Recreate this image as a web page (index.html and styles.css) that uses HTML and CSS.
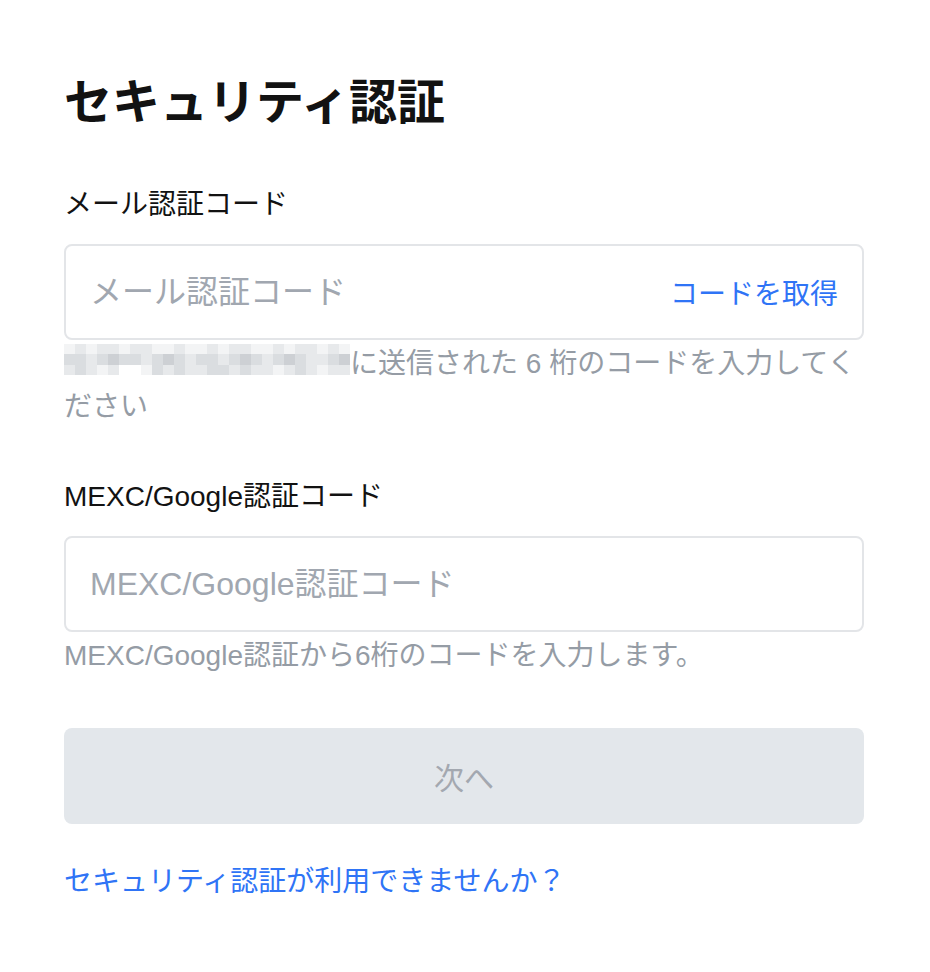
FILE: index.html
```html
<!DOCTYPE html>
<html lang="ja">
<head>
<meta charset="utf-8">
<title>セキュリティ認証</title>
<link rel="stylesheet" href="styles.css">
</head>
<body>
<main class="page">
  <h1 class="title">セキュリティ認証</h1>

  <section class="field">
    <label class="label" for="mail">メール認証コード</label>
    <div class="box">
      <input class="input" id="mail" type="text" placeholder="メール認証コード">
      <a class="get-code" href="#">コードを取得</a>
    </div>
    <p class="help"><span class="masked" aria-hidden="true"><i class="s0"></i><i class="s1"></i><i class="s0"></i><i class="s1"></i><i class="s1"></i><i class="s0"></i><i class="s1"></i><i class="s1"></i><i class="s0"></i><i class="s0"></i><i class="s1"></i><i class="s0"></i><i class="s0"></i><i class="s1"></i><i class="s0"></i><i class="s1"></i><i class="s1"></i><i class="s0"></i><i class="s0"></i><i class="s1"></i><i class="s0"></i><i class="s1"></i><i class="s1"></i><i class="s0"></i><i class="s1"></i><i class="s0"></i><i class="s2"></i><i class="s2"></i><i class="s1"></i><i class="s2"></i><i class="s3"></i><i class="s2"></i><i class="s2"></i><i class="s1"></i><i class="s2"></i><i class="s3"></i><i class="s2"></i><i class="s1"></i><i class="s2"></i><i class="s2"></i><i class="s1"></i><i class="s2"></i><i class="s3"></i><i class="s2"></i><i class="s1"></i><i class="s2"></i><i class="s3"></i><i class="s2"></i><i class="s1"></i><i class="s1"></i><i class="s2"></i><i class="s3"></i><i class="s1"></i><i class="s2"></i><i class="s1"></i><i class="s0"></i><i class="s1"></i><i class="w"></i><i class="w"></i><i class="s0"></i><i class="s2"></i><i class="s1"></i><i class="s2"></i><i class="s1"></i><i class="s1"></i><i class="s2"></i><i class="s2"></i><i class="s1"></i><i class="s2"></i><i class="s1"></i><i class="s1"></i><i class="s0"></i><i class="s1"></i><i class="s2"></i><i class="s1"></i><i class="s0"></i><i class="s1"></i><i class="s1"></i></span>に送信された 6 桁のコードを入力してください</p>
  </section>

  <section class="field field-second">
    <label class="label" for="ga">MEXC/Google認証コード</label>
    <div class="box">
      <input class="input" id="ga" type="text" placeholder="MEXC/Google認証コード">
    </div>
    <p class="help">MEXC/Google認証から6桁のコードを入力します。</p>
  </section>

  <button class="next" type="button" disabled>次へ</button>

  <a class="help-link" href="#">セキュリティ認証が利用できませんか？</a>
</main>
</body>
</html>
```

FILE: styles.css
```css
* {
  box-sizing: border-box;
}

html, body {
  margin: 0;
  padding: 0;
  background: #ffffff;
}

body {
  font-family: "Liberation Sans", "Noto Sans CJK JP", sans-serif;
  color: #121212;
}

.page {
  width: 800px;
  margin-left: 64px;
  padding-top: 72px;
  display: flex;
  flex-direction: column;
}

.title {
  margin: 0 0 51px;
  font-size: 48px;
  line-height: 62px;
  font-weight: 700;
  color: #121212;
}

.field {
  display: flex;
  flex-direction: column;
}

.field-second {
  margin-top: 49px;
}

.label {
  font-size: 28px;
  line-height: 40px;
  color: #121212;
  margin-bottom: 19px;
}

.box {
  height: 96px;
  border: 2px solid #e3e5e8;
  border-radius: 8px;
  display: flex;
  align-items: center;
  padding: 0 24px;
  gap: 16px;
}

.input {
  flex: 1;
  min-width: 0;
  border: none;
  outline: none;
  background: transparent;
  padding: 0;
  font-family: "Liberation Sans", "Noto Sans CJK JP", sans-serif;
  font-size: 32px;
  color: #121212;
}

.input::placeholder {
  color: #a1a7b0;
  opacity: 1;
}

.get-code {
  font-size: 28px;
  color: #2f74f6;
  text-decoration: none;
  white-space: nowrap;
}

.help {
  margin: 0;
  padding-top: 2px;
  font-size: 28px;
  line-height: 43px;
  color: #959ca5;
}

.masked {
  display: inline-grid;
  grid-template-columns: repeat(26, 11px);
  grid-template-rows: 10px 11px 10px;
  vertical-align: top;
  margin-top: 2px;
}

.masked i {
  display: block;
}

.masked .w { background: #ffffff; }
.masked .s0 { background: #f3f4f5; }
.masked .s1 { background: #e7e9eb; }
.masked .s2 { background: #dadde0; }
.masked .s3 { background: #cdd0d4; }

.next {
  margin-top: 51px;
  height: 96px;
  width: 100%;
  border: none;
  border-radius: 8px;
  background: #e3e7eb;
  color: #a3a8b0;
  font-family: "Liberation Sans", "Noto Sans CJK JP", sans-serif;
  font-size: 30px;
  cursor: not-allowed;
}

.help-link {
  margin-top: 38px;
  font-size: 28px;
  line-height: 40px;
  color: #2f74f6;
  text-decoration: none;
  align-self: flex-start;
}
```
